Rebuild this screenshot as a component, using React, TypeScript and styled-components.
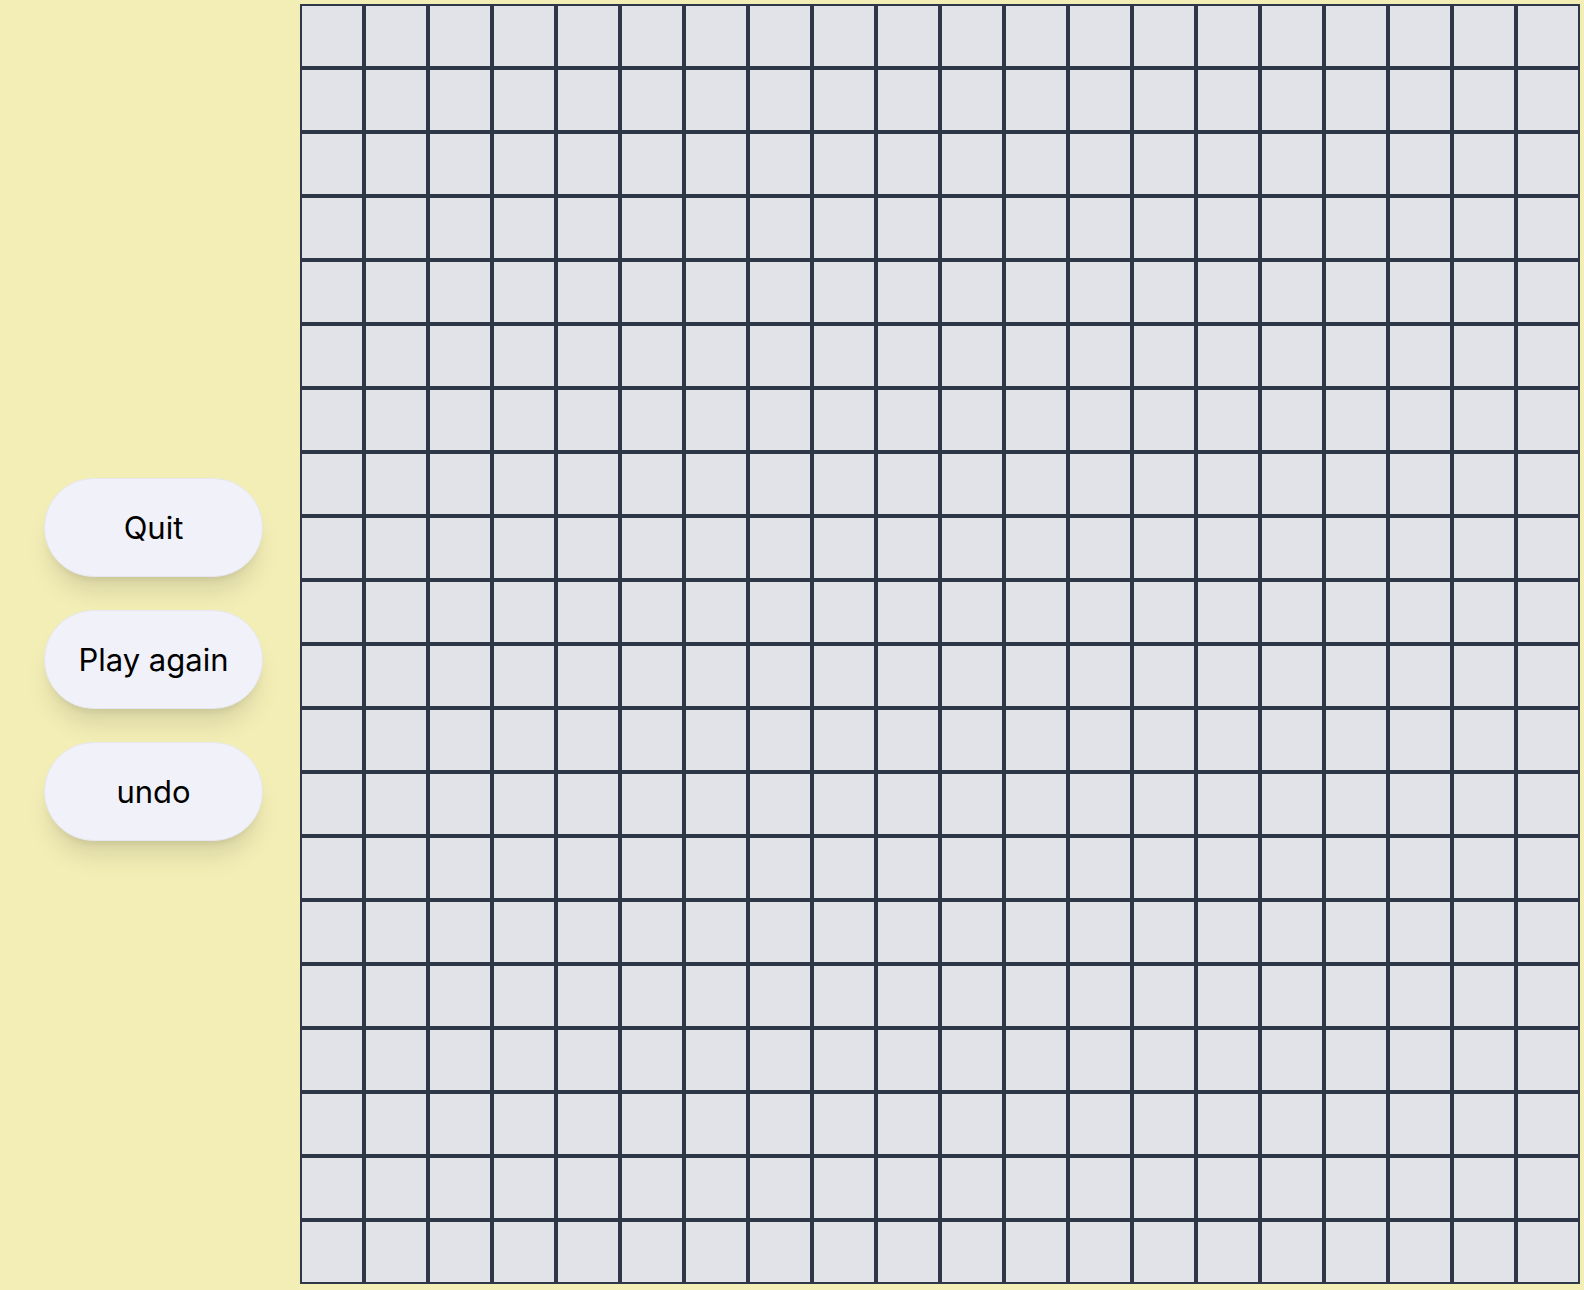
import React from "react";
import styled, { createGlobalStyle } from "styled-components";

const Global = createGlobalStyle`
  html, body { margin: 0; padding: 0; background: #f3eeb6; }
  body { font-family: Inter, "Noto Sans", "Liberation Sans", sans-serif; }
`;

const Page = styled.div`
  display: flex;
  flex-direction: row;
  align-items: flex-start;
  min-height: 1290px;
  background: #f3eeb6;
`;

const Side = styled.div`
  width: 300px;
  height: 1290px;
  box-sizing: border-box;
  padding: 29px 0 0 44px;
  display: flex;
  flex-direction: column;
  justify-content: center;
  gap: 33px;
`;

const Button = styled.button`
  width: 219px;
  height: 99px;
  border: 1px solid #e6e7ee;
  border-radius: 9999px;
  background: #f1f2f9;
  color: #000;
  font-family: Inter, "Noto Sans", "Liberation Sans", sans-serif;
  font-size: 31px;
  font-weight: 400;
  box-shadow: 0 20px 25px -5px rgba(0, 0, 0, 0.1), 0 8px 10px -6px rgba(0, 0, 0, 0.1);
  cursor: pointer;
  padding: 0;
`;

const Board = styled.div`
  margin-top: 4px;
  display: grid;
  grid-template-columns: repeat(20, 64px);
  grid-template-rows: repeat(20, 64px);
`;

const Cell = styled.div`
  box-sizing: border-box;
  width: 64px;
  height: 64px;
  background: #e2e3e9;
  border: 2px solid #2d3748;
`;

export default function App() {
  const cells = Array.from({ length: 400 }, (_, i) => i);
  return (
    <>
      <Global />
      <Page>
        <Side>
          <Button>Quit</Button>
          <Button>Play again</Button>
          <Button>undo</Button>
        </Side>
        <Board>
          {cells.map((i) => (
            <Cell key={i} />
          ))}
        </Board>
      </Page>
    </>
  );
}
